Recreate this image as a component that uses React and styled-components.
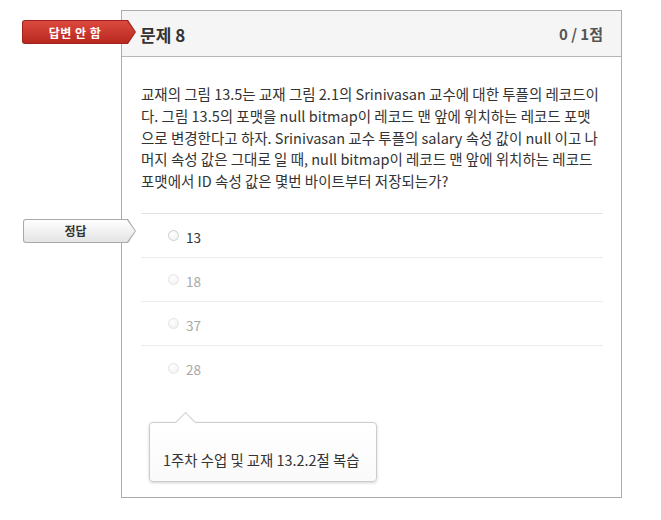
import React from "react";
import styled, { createGlobalStyle } from "styled-components";

const GlobalStyle = createGlobalStyle`
  html, body {
    margin: 0;
    padding: 0;
    background: #ffffff;
  }
  body {
    font-family: "Noto Sans CJK KR", "Noto Sans", sans-serif;
    color: #333333;
  }
`;

const Page = styled.div`
  padding: 10px 0 20px 121px;
`;

const Card = styled.section`
  position: relative;
  box-sizing: border-box;
  width: 501px;
  border: 1px solid #ababab;
  background: #ffffff;
  padding-bottom: 15px;
`;

const Header = styled.header`
  position: relative;
  box-sizing: border-box;
  height: 46px;
  display: flex;
  align-items: center;
  justify-content: space-between;
  padding: 0 18px 0 18px;
  background: #f5f5f5;
  border-bottom: 1px solid #b5b5b5;
`;

const Title = styled.h2`
  margin: 2px 0 0;
  font-size: 17px;
  font-weight: 700;
  color: #333333;
`;

const Score = styled.span`
  font-size: 15px;
  font-weight: 700;
  color: #555555;
`;

const arrowShape = `polygon(0 0, calc(100% - 8px) 0, 100% 50%, calc(100% - 8px) 100%, 0 100%)`;

const Tag = styled.div`
  position: absolute;
  left: ${(p) => p.$left}px;
  top: ${(p) => p.$top}px;
  box-sizing: border-box;
  width: ${(p) => p.$width}px;
  height: ${(p) => p.$height}px;
  padding-right: 8px;
  display: flex;
  align-items: center;
  justify-content: center;
  font-size: 12px;
  font-weight: 700;
  border-radius: 3px 0 0 3px;
  clip-path: ${arrowShape};
  z-index: 0;

  &::before {
    content: "";
    position: absolute;
    inset: 1px;
    border-radius: 2px 0 0 2px;
    clip-path: ${arrowShape};
    z-index: -1;
  }
`;

const StatusTag = styled(Tag)`
  color: #ffffff;
  letter-spacing: 0.5px;
  background: #9e221b;
  &::before {
    background: linear-gradient(#dc4a3e, #b8281f);
  }
`;

const AnswerTag = styled(Tag)`
  color: #333333;
  background: #a9a9a9;
  &::before {
    background: linear-gradient(#ffffff, #e4e4e4);
  }
`;

const Body = styled.div`
  padding: 26px 18px 0 19px;
`;

const Question = styled.p`
  margin: 0 0 21px;
  font-size: 14.5px;
  line-height: 21.8px;
  color: #333333;
`;

const Options = styled.ul`
  position: relative;
  list-style: none;
  margin: 0;
  padding: 0;
  border-top: 1px solid #e2e2e2;
`;

const Option = styled.li`
  display: flex;
  align-items: center;
  gap: 7px;
  height: 44px;
  padding: 3px 0 0 27px;
  box-sizing: border-box;
  border-bottom: 1px solid #ececec;
  font-size: 13.5px;
  color: ${(p) => (p.$dim ? "#a8a8a8" : "#333333")};

  &:last-child {
    border-bottom: none;
  }
`;

const Radio = styled.span`
  box-sizing: border-box;
  width: 11px;
  height: 11px;
  border-radius: 50%;
  border: 1px solid ${(p) => (p.$dim ? "#e4e4e4" : "#cfcfcf")};
  background: radial-gradient(circle at 40% 35%, #ffffff, #efefef);
  margin-top: -2px;
`;

const Hint = styled.div`
  position: relative;
  box-sizing: border-box;
  width: 228px;
  margin: 32px 0 0 27px;
  padding: 26px 13px 10px 13px;
  border: 1px solid #cccccc;
  border-radius: 4px;
  background: linear-gradient(#ffffff, #fafafa);
  box-shadow: 0 1px 3px rgba(0, 0, 0, 0.18);
  font-size: 14.4px;
  line-height: 22px;
  white-space: nowrap;
  color: #333333;

  &::before {
    content: "";
    position: absolute;
    left: 28px;
    top: -8px;
    width: 14px;
    height: 14px;
    background: #ffffff;
    border-top: 1px solid #cccccc;
    border-left: 1px solid #cccccc;
    transform: rotate(45deg);
  }
`;

const options = [
  { label: "13", dim: false },
  { label: "18", dim: true },
  { label: "37", dim: true },
  { label: "28", dim: true },
];

export default function App() {
  return (
    <>
      <GlobalStyle />
      <Page>
        <Card>
          <Header>
            <StatusTag $left={-100} $top={9} $width={114} $height={24}>
              답변 안 함
            </StatusTag>
            <Title>문제 8</Title>
            <Score>0 / 1점</Score>
          </Header>
          <Body>
            <Question>
              교재의 그림 13.5는 교재 그림 2.1의 Srinivasan 교수에 대한 투플의 레코드이다. 그림
              13.5의 포맷을 null bitmap이 레코드 맨 앞에 위치하는 레코드 포맷으로 변경한다고 하자.
              Srinivasan 교수 투플의 salary 속성 값이 null 이고 나머지 속성 값은 그대로 일 때, null
              bitmap이 레코드 맨 앞에 위치하는 레코드 포맷에서 ID 속성 값은 몇번 바이트부터
              저장되는가?
            </Question>
            <Options>
              <AnswerTag $left={-118} $top={5} $width={113} $height={24}>
                정답
              </AnswerTag>
              {options.map((o) => (
                <Option key={o.label} $dim={o.dim}>
                  <Radio $dim={o.dim} />
                  {o.label}
                </Option>
              ))}
            </Options>
          </Body>
          <Hint>1주차 수업 및 교재 13.2.2절 복습</Hint>
        </Card>
      </Page>
    </>
  );
}
